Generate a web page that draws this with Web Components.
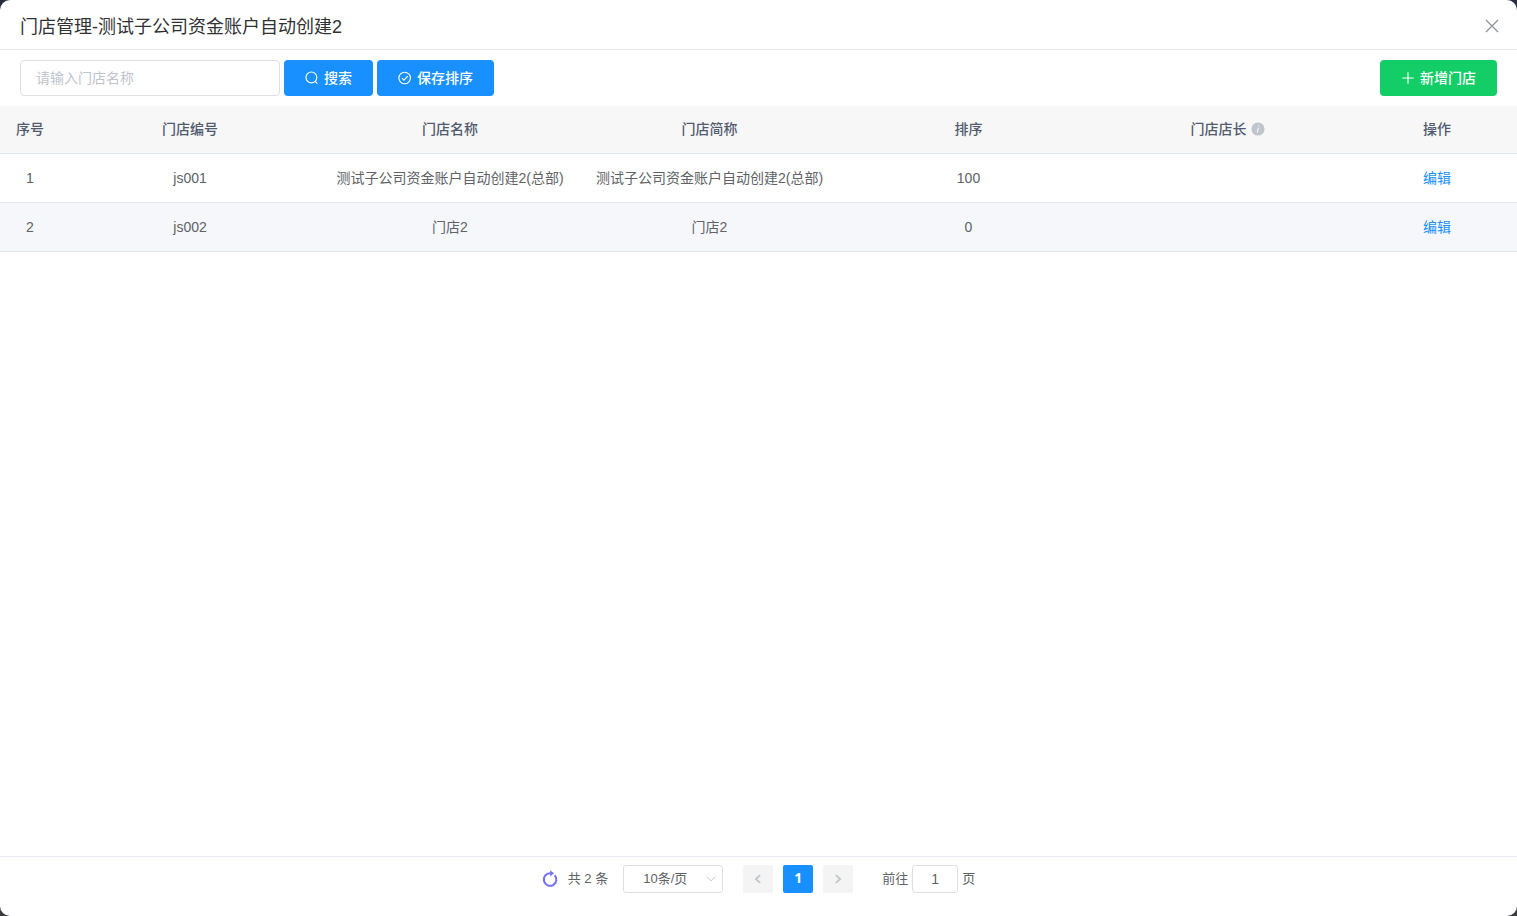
<!DOCTYPE html>
<html lang="zh-CN">
<head>
<meta charset="utf-8">
<title>门店管理</title>
<style>
  html, body { height: 100%; margin: 0; }
  body {
    background: linear-gradient(#262d3d 50%, #3c3c3e 50%);
    font: 14px/20px "Liberation Sans", "Noto Sans CJK SC", sans-serif;
    color: #606266;
  }
</style>
</head>
<body>
<store-dialog heading="门店管理-测试子公司资金账户自动创建2">
  <store-toolbar slot="toolbar"></store-toolbar>
  <store-table></store-table>
  <store-pager slot="footer" total="2"></store-pager>
</store-dialog>

<script>
const ICONS = {
  close: '<path d="M2 2l12 12M14 2L2 14"/>',
  search: '<circle cx="7.3" cy="7.4" r="6.2"/><path d="M11.6 11.8l2.6 2.6"/>',
  check: '<circle cx="7.6" cy="8" r="6.6"/><path d="M4.6 8.2l2.2 2.2L11 6"/>',
  plus: '<path d="M8 1.5v13M1.5 8h13"/>',
  refresh: '<path d="M12.7 4.2A6.3 6.3 0 1 1 8 2.2h1.500"/><path d="M8.200 -.8L12 2.300L8.200 5.400z" fill="currentColor" stroke="none"/>',
  left: '<path d="M10.5 3.5L5.5 8l5 4.5"/>',
  right: '<path d="M5.5 3.5l5 4.5-5 4.5"/>',
  down: '<path d="M2.5 5L8 10.5L13.5 5"/>',
  info: '<circle cx="8" cy="8" r="7.5" fill="currentColor" stroke="none"/><path d="M8.4 7L7.3 11.7M9 4.3v.2" stroke="#f7f7f7" stroke-linecap="round"/>'
};

class UiIcon extends HTMLElement {
  connectedCallback() {
    const weight = this.getAttribute('weight') || '1.3';
    this.attachShadow({ mode: 'open' }).innerHTML = `
      <style>
        :host { display: inline-flex; width: 14px; height: 14px; flex: none; }
        svg { width: 100%; height: 100%; display: block; overflow: visible; }
      </style>
      <svg viewBox="0 0 16 16" fill="none" stroke="currentColor" stroke-width="${weight}" aria-hidden="true">${ICONS[this.getAttribute('name')]}</svg>`;
  }
}
customElements.define('ui-icon', UiIcon);

class UiButton extends HTMLElement {
  connectedCallback() {
    this.attachShadow({ mode: 'open' }).innerHTML = `
      <style>
        :host { display: inline-flex; --fill: #1890ff; }
        :host([kind="success"]) { --fill: #13ce66; }
        button {
          display: flex; align-items: center; gap: 5px;
          height: 36px; padding: 0 21px; border: 0; border-radius: 4px;
          background: var(--fill); color: #fff; font: inherit; font-weight: 500; cursor: pointer;
        }
      </style>
      <button type="button"><ui-icon name="${this.getAttribute('icon')}"></ui-icon><slot></slot></button>`;
  }
}
customElements.define('ui-button', UiButton);

class StoreDialog extends HTMLElement {
  connectedCallback() {
    this.attachShadow({ mode: 'open' }).innerHTML = `
      <style>
        :host {
          display: flex; flex-direction: column; min-height: 100vh;
          background: #fff; border-radius: 10px; overflow: hidden;
        }
        header {
          display: flex; align-items: flex-start; justify-content: space-between;
          padding: 15px 17px 10px 20px; border-bottom: 1px solid #e4e7ed;
        }
        h1 { margin: 0; font-size: 18px; line-height: 24px; font-weight: 400; color: #303133; }
        button { display: flex; padding: 3px 0; border: 0; background: none; color: #909399; cursor: pointer; }
        button ui-icon { width: 16px; height: 16px; }
        main { flex: 1; }
        footer { border-top: 1px solid #e6ebf5; padding: 8px 20px 23px; }
      </style>
      <header>
        <h1>${this.getAttribute('heading')}</h1>
        <button type="button" aria-label="关闭"><ui-icon name="close"></ui-icon></button>
      </header>
      <slot name="toolbar"></slot>
      <main><slot></slot></main>
      <footer><slot name="footer"></slot></footer>`;
  }
}
customElements.define('store-dialog', StoreDialog);

class StoreToolbar extends HTMLElement {
  connectedCallback() {
    this.attachShadow({ mode: 'open' }).innerHTML = `
      <style>
        :host { display: flex; align-items: center; gap: 4px; padding: 10px 20px; }
        input {
          box-sizing: border-box; width: 260px; height: 36px; padding: 0 15px;
          border: 1px solid #dcdfe6; border-radius: 4px; font: inherit; color: #606266; outline: 0;
        }
        input::placeholder { color: #c0c4cc; }
        .add { margin-left: auto; }
      </style>
      <input type="text" aria-label="门店名称" placeholder="请输入门店名称">
      <ui-button icon="search">搜索</ui-button>
      <ui-button icon="check">保存排序</ui-button>
      <ui-button class="add" kind="success" icon="plus">新增门店</ui-button>`;
  }
}
customElements.define('store-toolbar', StoreToolbar);

const STORES = [
  { code: 'js001', name: '测试子公司资金账户自动创建2(总部)', short: '测试子公司资金账户自动创建2(总部)', sort: 100, manager: '' },
  { code: 'js002', name: '门店2', short: '门店2', sort: 0, manager: '' }
];

class StoreTable extends HTMLElement {
  connectedCallback() {
    const rows = STORES.map((s, i) => `
      <tr><td>${i + 1}</td><td>${s.code}</td><td>${s.name}</td><td>${s.short}</td><td>${s.sort}</td><td>${s.manager}</td><td><a href="#">编辑</a></td></tr>`).join('');
    this.attachShadow({ mode: 'open' }).innerHTML = `
      <style>
        :host { display: block; }
        table { width: 100%; table-layout: fixed; border-collapse: separate; border-spacing: 0; }
        .index { width: 60px; }
        .wide { width: 260px; }
        .actions { width: 160px; }
        th, td { padding: 14px 0; height: 20px; text-align: center; border-bottom: 1px solid #dfe6ec; white-space: nowrap; }
        th { padding: 13px 0 14px; background: #f7f7f7; color: #515a6e; font-weight: 500; }
        tbody tr:nth-child(even) { background: #f5f7fb; }
        a { color: #1890ff; text-decoration: none; }
        .hint { display: inline-flex; align-items: center; gap: 4px; vertical-align: top; }
        .hint ui-icon { color: #c0c4cc; }
      </style>
      <table>
        <colgroup><col class="index"><col class="wide"><col class="wide"><col><col><col><col class="actions"></colgroup>
        <thead><tr>
          <th>序号</th><th>门店编号</th><th>门店名称</th><th>门店简称</th><th>排序</th>
          <th><span class="hint">门店店长<ui-icon name="info"></ui-icon></span></th><th>操作</th>
        </tr></thead>
        <tbody>${rows}</tbody>
      </table>`;
  }
}
customElements.define('store-table', StoreTable);

class StorePager extends HTMLElement {
  connectedCallback() {
    this.attachShadow({ mode: 'open' }).innerHTML = `
      <style>
        :host {
          display: flex; justify-content: center; align-items: center; height: 28px;
          font-size: 13px; line-height: 28px;
        }
        button {
          display: flex; align-items: center; justify-content: center;
          padding: 0; border: 0; border-radius: 2px; font: inherit; cursor: pointer;
        }
        .refresh { background: none; color: #7672f8; margin-right: 10px; }
        .refresh ui-icon { width: 16px; height: 16px; }
        .size { position: relative; display: flex; margin: 0 20px 0 15px; }
        .size ui-icon { position: absolute; right: 6px; top: 8px; width: 12px; height: 12px; color: #c0c4cc; pointer-events: none; }
        select, input {
          box-sizing: border-box; height: 28px; border: 1px solid #dcdfe6; border-radius: 3px;
          background: #fff; color: #606266; font: inherit; line-height: 26px; outline: 0;
        }
        select { appearance: none; width: 100px; padding: 0 19px; }
        ol { display: flex; gap: 10px; margin: 0 29px 0 0; padding: 0; list-style: none; }
        ol button { width: 30px; height: 28px; background: #f4f4f5; color: #c0c4cc; }
        ol button[aria-current] {
          padding-bottom: 2px; background: #1890ff; color: #fff;
          font-family: "Noto Sans", sans-serif; font-size: 14px; font-weight: 700; line-height: 26px;
        }
        label { display: flex; align-items: center; gap: 4px; }
        input { width: 46px; padding: 0 3px; text-align: center; font-size: 14px; }
      </style>
      <button class="refresh" type="button" aria-label="刷新"><ui-icon name="refresh" weight="2"></ui-icon></button>
      <span>共 ${this.getAttribute('total')} 条</span>
      <div class="size">
        <select aria-label="每页条数"><option>10条/页</option></select>
        <ui-icon name="down"></ui-icon>
      </div>
      <ol>
        <li><button type="button" aria-label="上一页" disabled><ui-icon name="left" weight="2"></ui-icon></button></li>
        <li><button type="button" aria-current="page">1</button></li>
        <li><button type="button" aria-label="下一页" disabled><ui-icon name="right" weight="2"></ui-icon></button></li>
      </ol>
      <label>前往 <input type="text" value="1"> 页</label>`;
  }
}
customElements.define('store-pager', StorePager);
</script>
</body>
</html>
